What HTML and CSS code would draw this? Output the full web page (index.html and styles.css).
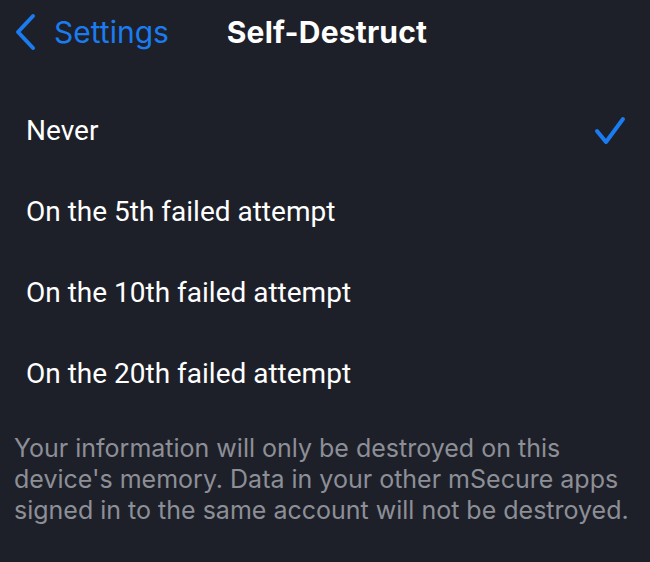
FILE: index.html
```html
<!DOCTYPE html>
<html>
<head>
<meta charset="utf-8">
<link rel="stylesheet" href="styles.css">
</head>
<body>
<div class="screen">
  <header class="nav">
    <a class="back">
      <svg class="chev" width="24" height="38" viewBox="0 0 24 38"><path d="M19 3 L4 19 L19 35" fill="none" stroke="#1a7cf0" stroke-width="4" stroke-linecap="round" stroke-linejoin="round"/></svg>
      <span class="back-label">Settings</span>
    </a>
    <h1 class="title">Self-Destruct</h1>
    <div class="spacer"></div>
  </header>
  <ul class="options">
    <li class="option"><span>Never</span>
      <svg class="check" width="32" height="30" viewBox="0 0 32 30"><path d="M3 15 L12 26 L29 3" fill="none" stroke="#1a7cf0" stroke-width="4" stroke-linecap="round" stroke-linejoin="round"/></svg>
    </li>
    <li class="option"><span>On the 5th failed attempt</span></li>
    <li class="option"><span>On the 10th failed attempt</span></li>
    <li class="option"><span>On the 20th failed attempt</span></li>
  </ul>
  <p class="note">Your information will only be destroyed on this device's memory. Data in your other mSecure apps signed in to the same account will not be destroyed.</p>
</div>
</body>
</html>
```
FILE: styles.css
```css
html, body {
  margin: 0;
  padding: 0;
  background: #1e2029;
}
.screen {
  width: 650px;
  height: 562px;
  overflow: hidden;
  font-family: Inter, "Liberation Sans", sans-serif;
  color: #ffffff;
}
.nav {
  display: grid;
  grid-template-columns: 1fr auto 1fr;
  align-items: center;
  height: 64px;
}
.back {
  display: flex;
  align-items: center;
  gap: 16px;
  padding-left: 14px;
  color: #1a7cf0;
}
.chev { display: block; }
.back-label {
  font-size: 30px;
  font-weight: 400;
}
.title {
  margin: 0 0 0 4px;
  font-size: 30px;
  font-weight: 700;
  letter-spacing: 0.2px;
}
.options {
  list-style: none;
  margin: 26px 0 0;
  padding: 0;
  font-family: Roboto, "Liberation Sans", sans-serif;
}
.option {
  display: flex;
  align-items: center;
  justify-content: space-between;
  height: 81px;
  padding: 0 24px 0 26px;
  font-size: 28px;
}
.check { display: block; }
.note {
  margin: 19px 0 0;
  padding: 0 14px;
  font-size: 25px;
  line-height: 31px;
  color: #8d8f97;
}
```
